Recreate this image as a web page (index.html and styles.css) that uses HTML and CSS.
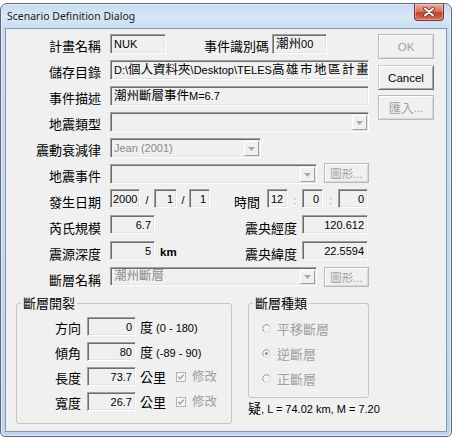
FILE: index.html
```html
<!DOCTYPE html>
<html lang="zh-Hant">
<head>
<meta charset="utf-8">
<title>Scenario Definition Dialog</title>
<link rel="stylesheet" href="styles.css">
</head>
<body>
<div class="window">
  <div class="titlebar">
    <span class="title">Scenario Definition Dialog</span>
    <span class="close">
      <svg width="12" height="10" viewBox="0 0 12 10">
        <path d="M2 1.5 L10 8.5 M10 1.5 L2 8.5" stroke="#5a2a22" stroke-width="3.6" stroke-linecap="round"/>
        <path d="M2 1.5 L10 8.5 M10 1.5 L2 8.5" stroke="#ffffff" stroke-width="2" stroke-linecap="round"/>
      </svg>
    </span>
  </div>

  <div class="client">
    <div class="top">
      <div class="form">
        <div class="row">
          <span class="lbl">計畫名稱</span>
          <span class="field f-name">NUK</span>
          <span class="lbl lbl-fill gap3">事件識別碼</span>
          <span class="field f-id"><span class="cj">潮州</span>00</span>
        </div>
        <div class="row">
          <span class="lbl">儲存目錄</span>
          <span class="field f-wide">D:\<span class="cj">個人資料夾</span>\Desktop\TELES<span class="cj cj-loose">高雄市地區計畫</span></span>
        </div>
        <div class="row">
          <span class="lbl">事件描述</span>
          <span class="field f-wide"><span class="cj">潮州斷層事件</span>M=6.7</span>
        </div>
        <div class="row">
          <span class="lbl">地震類型</span>
          <span class="field combo f-wide"><span class="combo-text"></span><span class="drop"><svg width="7" height="4" viewBox="0 0 7 4"><path d="M0 0 H7 L3.5 4 Z" fill="#a8a8a8"/></svg></span></span>
        </div>
        <div class="row">
          <span class="lbl">震動衰減律</span>
          <span class="field combo f-law"><span class="combo-text dim">Jean (2001)</span><span class="drop"><svg width="7" height="4" viewBox="0 0 7 4"><path d="M0 0 H7 L3.5 4 Z" fill="#a8a8a8"/></svg></span></span>
        </div>
        <div class="row">
          <span class="lbl">地震事件</span>
          <span class="field combo f-event"><span class="combo-text"></span><span class="drop"><svg width="7" height="4" viewBox="0 0 7 4"><path d="M0 0 H7 L3.5 4 Z" fill="#a8a8a8"/></svg></span></span>
          <span class="btn small off">圖形...</span>
        </div>
        <div class="row">
          <span class="lbl">發生日期</span>
          <span class="field sm f-year">2000</span>
          <span class="sep s-14">/</span>
          <span class="field sm num f-month">1</span>
          <span class="sep s-12">/</span>
          <span class="field sm num f-day">1</span>
          <span class="lbl lbl-fill gap7">時間</span>
          <span class="field sm f-hour">12</span>
          <span class="sep s-14 faint">:</span>
          <span class="field sm num f-min">0</span>
          <span class="sep s-15 faint">:</span>
          <span class="field sm num f-sec">0</span>
        </div>
        <div class="row">
          <span class="lbl">芮氏規模</span>
          <span class="field sm num f-short">6.7</span>
          <span class="lbl lbl-fill gap5">震央經度</span>
          <span class="field sm num f-coord">120.612</span>
        </div>
        <div class="row">
          <span class="lbl">震源深度</span>
          <span class="field sm num f-short">5</span>
          <span class="unit">km</span>
          <span class="lbl lbl-fill gap5">震央緯度</span>
          <span class="field sm num f-coord">22.5594</span>
        </div>
        <div class="row">
          <span class="lbl">斷層名稱</span>
          <span class="field combo sm f-event"><span class="combo-text dim"><span class="cj">潮州斷層</span></span><span class="drop"><svg width="7" height="4" viewBox="0 0 7 4"><path d="M0 0 H7 L3.5 4 Z" fill="#a8a8a8"/></svg></span></span>
          <span class="btn small off">圖形...</span>
        </div>
      </div>

      <div class="buttons">
        <span class="btn off">OK</span>
        <span class="btn">Cancel</span>
        <span class="btn off"><span class="cj">匯入</span>...</span>
      </div>
    </div>

    <div class="bottom">
      <fieldset class="group rupture">
        <legend>斷層開裂</legend>
        <div class="grow">
          <span class="glbl">方向</span>
          <span class="field sm num f-param">0</span>
          <span class="suffix"><span class="cj13">度</span> (0 - 180)</span>
        </div>
        <div class="grow">
          <span class="glbl">傾角</span>
          <span class="field sm num f-param">80</span>
          <span class="suffix"><span class="cj13">度</span> (-89 - 90)</span>
        </div>
        <div class="grow">
          <span class="glbl">長度</span>
          <span class="field sm num f-param">73.7</span>
          <span class="suffix cj13">公里</span>
          <span class="check"><svg width="10" height="10" viewBox="0 0 10 10"><rect x="0.5" y="0.5" width="9" height="9" fill="#f6f6f6" stroke="#b4b4b4"/><path d="M2.2 4.8 L4.1 6.8 L7.8 2.8" fill="none" stroke="#a0a0a0" stroke-width="1.4"/></svg></span>
          <span class="check-lbl">修改</span>
        </div>
        <div class="grow">
          <span class="glbl">寬度</span>
          <span class="field sm num f-param">26.7</span>
          <span class="suffix cj13">公里</span>
          <span class="check"><svg width="10" height="10" viewBox="0 0 10 10"><rect x="0.5" y="0.5" width="9" height="9" fill="#f6f6f6" stroke="#b4b4b4"/><path d="M2.2 4.8 L4.1 6.8 L7.8 2.8" fill="none" stroke="#a0a0a0" stroke-width="1.4"/></svg></span>
          <span class="check-lbl">修改</span>
        </div>
      </fieldset>

      <div class="side">
        <fieldset class="group ftype">
          <legend>斷層種類</legend>
          <div class="radio">
            <svg class="rb" width="9" height="9" viewBox="0 0 9 9"><circle cx="4.5" cy="4.5" r="3.8" fill="#f4f4f4" stroke="#d8d8d8"/><path d="M7.2 1.8 A3.8 3.8 0 1 0 1.8 7.2" fill="none" stroke="#a0a0a0"/></svg>
            <span>平移斷層</span>
          </div>
          <div class="radio">
            <svg class="rb" width="9" height="9" viewBox="0 0 9 9"><circle cx="4.5" cy="4.5" r="3.8" fill="#f4f4f4" stroke="#d8d8d8"/><path d="M7.2 1.8 A3.8 3.8 0 1 0 1.8 7.2" fill="none" stroke="#a0a0a0"/><circle cx="4.5" cy="4.5" r="1.5" fill="#8c8c8c"/></svg>
            <span>逆斷層</span>
          </div>
          <div class="radio">
            <svg class="rb" width="9" height="9" viewBox="0 0 9 9"><circle cx="4.5" cy="4.5" r="3.8" fill="#f4f4f4" stroke="#d8d8d8"/><path d="M7.2 1.8 A3.8 3.8 0 1 0 1.8 7.2" fill="none" stroke="#a0a0a0"/></svg>
            <span>正斷層</span>
          </div>
        </fieldset>
        <div class="result"><span class="cj13">疑</span>, L = 74.02 km, M = 7.20</div>
      </div>
    </div>
  </div>
</div>
</body>
</html>
```

FILE: styles.css
```css
* {
  box-sizing: border-box;
}

html,
body {
  margin: 0;
  background: #ffffff;
}

body {
  font-family: "Liberation Sans", "Noto Sans CJK TC", sans-serif;
  font-size: 11px;
  color: #000;
}

/* ---------- window frame ---------- */
.window {
  margin-top: 3px;
  width: 452px;
  height: 434px;
  border: 1px solid #5b6878;
  border-radius: 7px 7px 5px 5px;
  background: linear-gradient(to bottom, #c6daf0 0, #d9e7f6 12px, #c9dcf1 26px, #bfd4ec 100%);
  box-shadow: inset 0 0 0 1px rgba(255, 255, 255, 0.55);
  padding: 0 4px 4px;
  display: flex;
  flex-direction: column;
}

.titlebar {
  height: 24px;
  display: flex;
  align-items: flex-start;
  justify-content: space-between;
  padding-left: 2px;
}

.title {
  font-family: "Noto Sans", sans-serif;
  font-size: 10.5px;
  line-height: 24px;
  color: #1a1a1a;
}

.close {
  width: 30px;
  height: 17px;
  margin-right: 3px;
  border: 1px solid #7a3428;
  border-top: none;
  border-radius: 0 0 4px 4px;
  background: linear-gradient(to bottom, #eab0a2 0, #d9735e 45%, #c5412b 55%, #d5725a 100%);
  box-shadow: inset 0 0 0 1px rgba(255, 255, 255, 0.35);
  display: flex;
  align-items: center;
  justify-content: center;
}

.client {
  flex: 1;
  background: #f0f0f0;
  border: 1px solid #8397b2;
}

/* ---------- upper form ---------- */
.top {
  display: flex;
  padding-top: 4px;
}

.form {
  width: 364px;
}

.row {
  display: flex;
  align-items: flex-start;
  height: 26px;
}

.lbl {
  width: 95px;
  flex: none;
  margin-right: 9px;
  margin-top: 3px;
  text-align: right;
  font-family: "Noto Sans CJK TC", sans-serif;
  font-size: 13px;
  line-height: 20px;
  white-space: nowrap;
}

.lbl-fill {
  flex: 1;
  width: auto;
  margin-right: 3px;
}

.gap3 { margin-right: 3px; }
.gap5 { margin-right: 5px; }
.gap7 { margin-right: 7px; }

.field {
  display: block;
  flex: none;
  height: 20px;
  margin-top: 1px;
  border: 1px solid;
  border-color: #a0a0a0 #ffffff #ffffff #a0a0a0;
  box-shadow: inset 1px 1px 0 #6d6d6d, inset -1px -1px 0 #e3e3e3;
  background: #f0f0f0;
  padding: 1px 3px 0;
  line-height: 17px;
  white-space: nowrap;
  overflow: hidden;
}

.field.sm {
  height: 19px;
  margin-top: 0;
  line-height: 16px;
}

.num {
  text-align: right;
}

.cj {
  font-size: 12.5px;
}

.cj-loose {
  letter-spacing: 1.5px;
}

.cj13 {
  font-size: 13px;
}

.dim {
  color: #8a8a8a;
}

.f-name { width: 56px; }
.f-id { width: 55px; margin-right: 43px; }
.f-wide { width: 259px; }
.f-law { width: 151px; }
.f-event { width: 207px; }
.f-year { width: 30px; padding-left: 2px; }
.f-month { width: 23px; }
.f-day { width: 21px; }
.f-hour { width: 21px; }
.f-min { width: 21px; }
.f-sec { width: 30px; margin-right: 2px; }
.f-short { width: 45px; }
.f-coord { width: 66px; margin-right: 2px; }

.combo {
  display: flex;
  align-items: stretch;
  padding: 0 0 0 3px;
}

.combo-text {
  flex: 1;
  padding-top: 1px;
  overflow: hidden;
}

.combo.sm .combo-text {
  padding-top: 0;
}

.drop {
  width: 15px;
  margin: 2px 1px 1px 0;
  border: 1px solid;
  border-color: #ffffff #a0a0a0 #a0a0a0 #ffffff;
  background: #f0f0f0;
  display: flex;
  align-items: center;
  justify-content: center;
}

.sep {
  flex: none;
  text-align: center;
  line-height: 22px;
}

.s-12 { width: 12px; }
.s-14 { width: 14px; }
.s-15 { width: 15px; }

.faint {
  color: #a0a0a0;
}

.unit {
  margin-left: 5px;
  font-weight: bold;
  font-size: 11.5px;
  line-height: 22px;
}

/* ---------- push buttons ---------- */
.buttons {
  margin-left: 8px;
  padding-top: 1px;
  display: flex;
  flex-direction: column;
  gap: 5px;
}

.buttons .btn:first-child {
  margin-bottom: 1px;
}

.btn {
  width: 56px;
  height: 25px;
  flex: none;
  border: 1px solid;
  border-color: #cfcfcf #6d6d6d #6d6d6d #cfcfcf;
  box-shadow: inset 1px 1px 0 #ffffff, inset -1px -1px 0 #a8a8a8;
  background: #f0f0f0;
  display: flex;
  align-items: center;
  justify-content: center;
  font-size: 11.5px;
  white-space: nowrap;
}

.btn.off {
  color: #a0a0a0;
  border-color: #b8b8b8;
  box-shadow: inset 1px 1px 0 #ffffff, inset -1px -1px 0 #d8d8d8;
}

.btn.small {
  width: 45px;
  height: 20px;
  margin-left: 7px;
  margin-top: 0;
}

/* ---------- group boxes ---------- */
.bottom {
  display: flex;
  align-items: flex-start;
  margin-top: 2px;
}

.group {
  margin: 0;
  padding: 0;
  min-width: 0;
  border: 1px solid #c6c6c6;
  border-radius: 3px;
}

.group legend {
  margin-left: 4px;
  padding: 0 2px;
  font-family: "Noto Sans CJK TC", sans-serif;
  font-size: 13px;
  line-height: 16px;
}

.rupture {
  margin-left: 10px;
  width: 216px;
  height: 129px;
  padding-top: 6px;
}

.grow {
  display: flex;
  align-items: flex-start;
  height: 25px;
}

.glbl {
  width: 64px;
  margin-right: 6px;
  margin-top: 1px;
  text-align: right;
  font-family: "Noto Sans CJK TC", sans-serif;
  font-size: 13px;
  line-height: 20px;
}

.f-param {
  width: 49px;
}

.suffix {
  margin-left: 4px;
  line-height: 21px;
  white-space: nowrap;
}

.check {
  margin-left: 10px;
  margin-top: 5px;
  display: flex;
}

.check-lbl {
  margin-left: 6px;
  color: #a0a0a0;
  font-size: 12.5px;
  line-height: 20px;
}

.side {
  margin-left: 16px;
}

.ftype {
  width: 121px;
  height: 103px;
  padding-top: 5px;
}

.radio {
  display: flex;
  align-items: center;
  height: 25px;
  padding-left: 13px;
  color: #a0a0a0;
  font-size: 13px;
}

.radio .rb {
  margin-right: 6px;
  flex: none;
}

.result {
  margin-top: 3px;
  line-height: 16px;
  white-space: nowrap;
}
```
